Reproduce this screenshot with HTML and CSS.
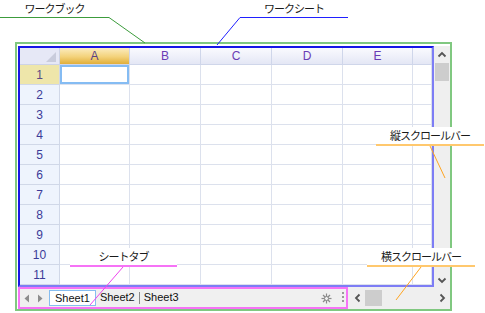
FILE: index.html
```html
<!DOCTYPE html>
<html>
<head>
    <title>ワークブック</title>
    <link rel="stylesheet" href="styles.css">
</head>
<body>
    <div class="workbook">
        <div class="sheet">
            <div class="row head">
                <div class="cell corner"><span class="corner-tri"></span></div>
                <div class="cell col sel">A</div>
                <div class="cell col">B</div>
                <div class="cell col">C</div>
                <div class="cell col">D</div>
                <div class="cell col">E</div>
                <div class="cell col"></div>
            </div>
            <div class="row">
                <div class="cell rh sel">1</div>
                <div class="cell active"></div><div class="cell"></div><div class="cell"></div><div class="cell"></div><div class="cell"></div><div class="cell"></div>
            </div>
            <div class="row">
                <div class="cell rh">2</div>
                <div class="cell"></div><div class="cell"></div><div class="cell"></div><div class="cell"></div><div class="cell"></div><div class="cell"></div>
            </div>
            <div class="row">
                <div class="cell rh">3</div>
                <div class="cell"></div><div class="cell"></div><div class="cell"></div><div class="cell"></div><div class="cell"></div><div class="cell"></div>
            </div>
            <div class="row">
                <div class="cell rh">4</div>
                <div class="cell"></div><div class="cell"></div><div class="cell"></div><div class="cell"></div><div class="cell"></div><div class="cell"></div>
            </div>
            <div class="row">
                <div class="cell rh">5</div>
                <div class="cell"></div><div class="cell"></div><div class="cell"></div><div class="cell"></div><div class="cell"></div><div class="cell"></div>
            </div>
            <div class="row">
                <div class="cell rh">6</div>
                <div class="cell"></div><div class="cell"></div><div class="cell"></div><div class="cell"></div><div class="cell"></div><div class="cell"></div>
            </div>
            <div class="row">
                <div class="cell rh">7</div>
                <div class="cell"></div><div class="cell"></div><div class="cell"></div><div class="cell"></div><div class="cell"></div><div class="cell"></div>
            </div>
            <div class="row">
                <div class="cell rh">8</div>
                <div class="cell"></div><div class="cell"></div><div class="cell"></div><div class="cell"></div><div class="cell"></div><div class="cell"></div>
            </div>
            <div class="row">
                <div class="cell rh">9</div>
                <div class="cell"></div><div class="cell"></div><div class="cell"></div><div class="cell"></div><div class="cell"></div><div class="cell"></div>
            </div>
            <div class="row">
                <div class="cell rh">10</div>
                <div class="cell"></div><div class="cell"></div><div class="cell"></div><div class="cell"></div><div class="cell"></div><div class="cell"></div>
            </div>
            <div class="row">
                <div class="cell rh">11</div>
                <div class="cell"></div><div class="cell"></div><div class="cell"></div><div class="cell"></div><div class="cell"></div><div class="cell"></div>
            </div>
        </div>

        <div class="vscroll">
            <div class="vbtn">
                <svg width="10" height="7" viewBox="0 0 10 7"><polyline points="1.5,5.5 5,2 8.5,5.5" fill="none" stroke="#555" stroke-width="1.8"/></svg>
            </div>
            <div class="vthumb"></div>
            <div class="vtrack"></div>
            <div class="vbtn down">
                <svg width="10" height="7" viewBox="0 0 10 7"><polyline points="1.5,1.5 5,5 8.5,1.5" fill="none" stroke="#555" stroke-width="1.8"/></svg>
            </div>
        </div>

        <div class="bottombar">
            <div class="tabs">
                <div class="tab-nav">
                    <svg width="8" height="9" viewBox="0 0 8 9"><polygon points="6,0.5 6,8.5 1.5,4.5" fill="#8d8d8d"/></svg>
                    <svg width="8" height="9" viewBox="0 0 8 9"><polygon points="2,0.5 2,8.5 6.5,4.5" fill="#8d8d8d"/></svg>
                </div>
                <div class="tab current">Sheet1</div>
                <div class="tab">Sheet2</div>
                <span class="tab-sep"></span>
                <div class="tab">Sheet3</div>
                <div class="tab-tools">
                    <svg width="11" height="11" viewBox="0 0 11 11">
                        <g stroke="#8a8a8a" stroke-width="1.2">
                            <line x1="5.5" y1="0.5" x2="5.5" y2="10.5"/>
                            <line x1="0.5" y1="5.5" x2="10.5" y2="5.5"/>
                            <line x1="2" y1="2" x2="9" y2="9"/>
                            <line x1="9" y1="2" x2="2" y2="9"/>
                        </g>
                        <circle cx="5.5" cy="5.5" r="2" fill="#f0f0f0" stroke="#8a8a8a" stroke-width="1"/>
                    </svg>
                    <span class="grip"></span>
                </div>
            </div>
            <div class="hscroll">
                <svg width="7" height="10" viewBox="0 0 7 10"><polyline points="5.5,1.5 2,5 5.5,8.5" fill="none" stroke="#555" stroke-width="1.8"/></svg>
                <div class="hthumb"></div>
                <div class="htrack"></div>
                <svg width="7" height="10" viewBox="0 0 7 10"><polyline points="1.5,1.5 5,5 1.5,8.5" fill="none" stroke="#555" stroke-width="1.8"/></svg>
            </div>
        </div>
    </div>

    <!-- callouts -->
    <svg class="leaders" width="485" height="313" viewBox="0 0 485 313">
        <line x1="109" y1="17.5" x2="145" y2="43" stroke="#3c9c3c" stroke-width="1"/>
        <line x1="240" y1="17.5" x2="217" y2="45" stroke="#2020ff" stroke-width="1"/>
        <line x1="430" y1="146" x2="445" y2="178" stroke="#ffa522" stroke-width="1"/>
        <line x1="421" y1="267" x2="396" y2="300" stroke="#ffa522" stroke-width="1"/>
        <line x1="123" y1="267" x2="90" y2="305" stroke="#ee44ee" stroke-width="1"/>
    </svg>
    <div class="label label-book">ワークブック</div>
    <div class="label label-sheet">ワークシート</div>
    <div class="label label-vscroll">縦スクロールバー</div>
    <div class="label label-hscroll">横スクロールバー</div>
    <div class="label label-tabs">シートタブ</div>
</body>
</html>
```

FILE: styles.css
```css
body {
    margin: 0;
    background-color: #fff;
    font-family: "Liberation Sans", Arial, sans-serif;
    position: relative;
    width: 485px;
    height: 313px;
    overflow: hidden;
}

/* workbook frame (green) */
.workbook {
    margin: 42px 0 0 15px;
    width: 437px;
    height: 269px;
    box-sizing: border-box;
    border: 2px solid #80c880;
    padding: 2px 0 0 1px;
    display: grid;
    grid-template-columns: 416px 16px;
    grid-template-rows: 241px 22px;
}

/* worksheet (blue) */
.sheet {
    box-sizing: border-box;
    border: 2px solid;
    border-color: #1717e6 #7d7df5 #7d7df5 #1717e6;
    overflow: hidden;
}
.row {
    display: grid;
    grid-template-columns: 40px 70px 71px 71px 71px 70px 1fr;
    height: 20px;
}
.row.head {
    height: 17px;
}
.cell {
    box-sizing: border-box;
    border-right: 1px solid #dce1ed;
    border-bottom: 1px solid #dce1ed;
    font-size: 12px;
    display: flex;
    align-items: center;
    justify-content: center;
}
.corner {
    background: #e6e8f6;
    border-color: #cdd3e6;
    position: relative;
}
.corner-tri {
    position: absolute;
    right: 3px;
    bottom: 2px;
    width: 0;
    height: 0;
    border-left: 10px solid transparent;
    border-bottom: 10px solid #c9ccdc;
}
.col {
    background: linear-gradient(#fafafe, #e4e7f5);
    border-color: #cfd6ea;
    color: #6a3cb5;
}
.col.sel {
    background: linear-gradient(#fbecc0, #f3d27a 55%, #e0ae3a);
    color: #5b3f86;
}
.rh {
    background: #eef4fd;
    border-color: #d0d8e8;
    color: #3b3b98;
}
.rh.sel {
    background: #eee6aa;
    color: #5a4a84;
}
.active {
    box-shadow: inset 0 0 0 2px #85bcf3;
}

/* vertical scrollbar */
.vscroll {
    background: #efefef;
    display: flex;
    flex-direction: column;
}
.vbtn {
    height: 17px;
    display: flex;
    align-items: center;
    justify-content: center;
}
.vbtn.down {
    height: 14px;
}
.vthumb {
    height: 18px;
    margin: 0 1px;
    background: #cdcdcd;
}
.vtrack {
    flex: 1;
}

/* bottom: sheet tabs + horizontal scrollbar */
.bottombar {
    grid-column: 1 / -1;
    display: flex;
}
.tabs {
    width: 330px;
    box-sizing: border-box;
    border: 2px solid #f673f6;
    background: #f0f0f0;
    display: flex;
    align-items: center;
    font-size: 11px;
    color: #111;
}
.tab-nav {
    display: flex;
    gap: 5px;
    padding-left: 3px;
    width: 26px;
    flex-shrink: 0;
}
.tab {
    padding: 0 4px;
    height: 16px;
    line-height: 15px;
    box-sizing: border-box;
}
.tab.current {
    background: #fff;
    border: 1px solid #86bdf0;
    padding: 0 5px;
}
.tab-sep {
    width: 1px;
    height: 12px;
    background: #8a8a8a;
}
.tab-tools {
    margin-left: auto;
    display: flex;
    align-items: center;
    gap: 10px;
    padding-right: 2px;
}
.grip {
    width: 2px;
    height: 12px;
    background: repeating-linear-gradient(#9a9a9a 0 2px, transparent 2px 4px);
}
.hscroll {
    flex: 1;
    background: #efefef;
    display: flex;
    align-items: center;
    padding: 0 4px 0 6px;
}
.hthumb {
    width: 17px;
    height: 16px;
    margin-left: 4px;
    background: #cdcdcd;
}
.htrack {
    flex: 1;
}

/* annotation overlay */
.leaders {
    position: absolute;
    left: 0;
    top: 0;
    pointer-events: none;
}
.label {
    position: absolute;
    height: 17px;
    line-height: 17px;
    background: #fff;
    text-align: center;
    font-family: "Noto Sans CJK JP", sans-serif;
    font-size: 11px;
    letter-spacing: -1px;
    color: #1a1a1a;
}
.label-book {
    left: 0;
    top: 0;
    width: 109px;
    border-bottom: 1px solid #3c9c3c;
}
.label-sheet {
    left: 240px;
    top: 0;
    width: 108px;
    border-bottom: 1px solid #2020ff;
}
.label-vscroll {
    left: 376px;
    top: 127px;
    width: 108px;
    border-bottom: 2px solid #ffc86e;
}
.label-hscroll {
    left: 367px;
    top: 248px;
    width: 108px;
    border-bottom: 2px solid #ffc86e;
}
.label-tabs {
    left: 70px;
    top: 248px;
    width: 107px;
    border-bottom: 2px solid #f673f6;
}
```
